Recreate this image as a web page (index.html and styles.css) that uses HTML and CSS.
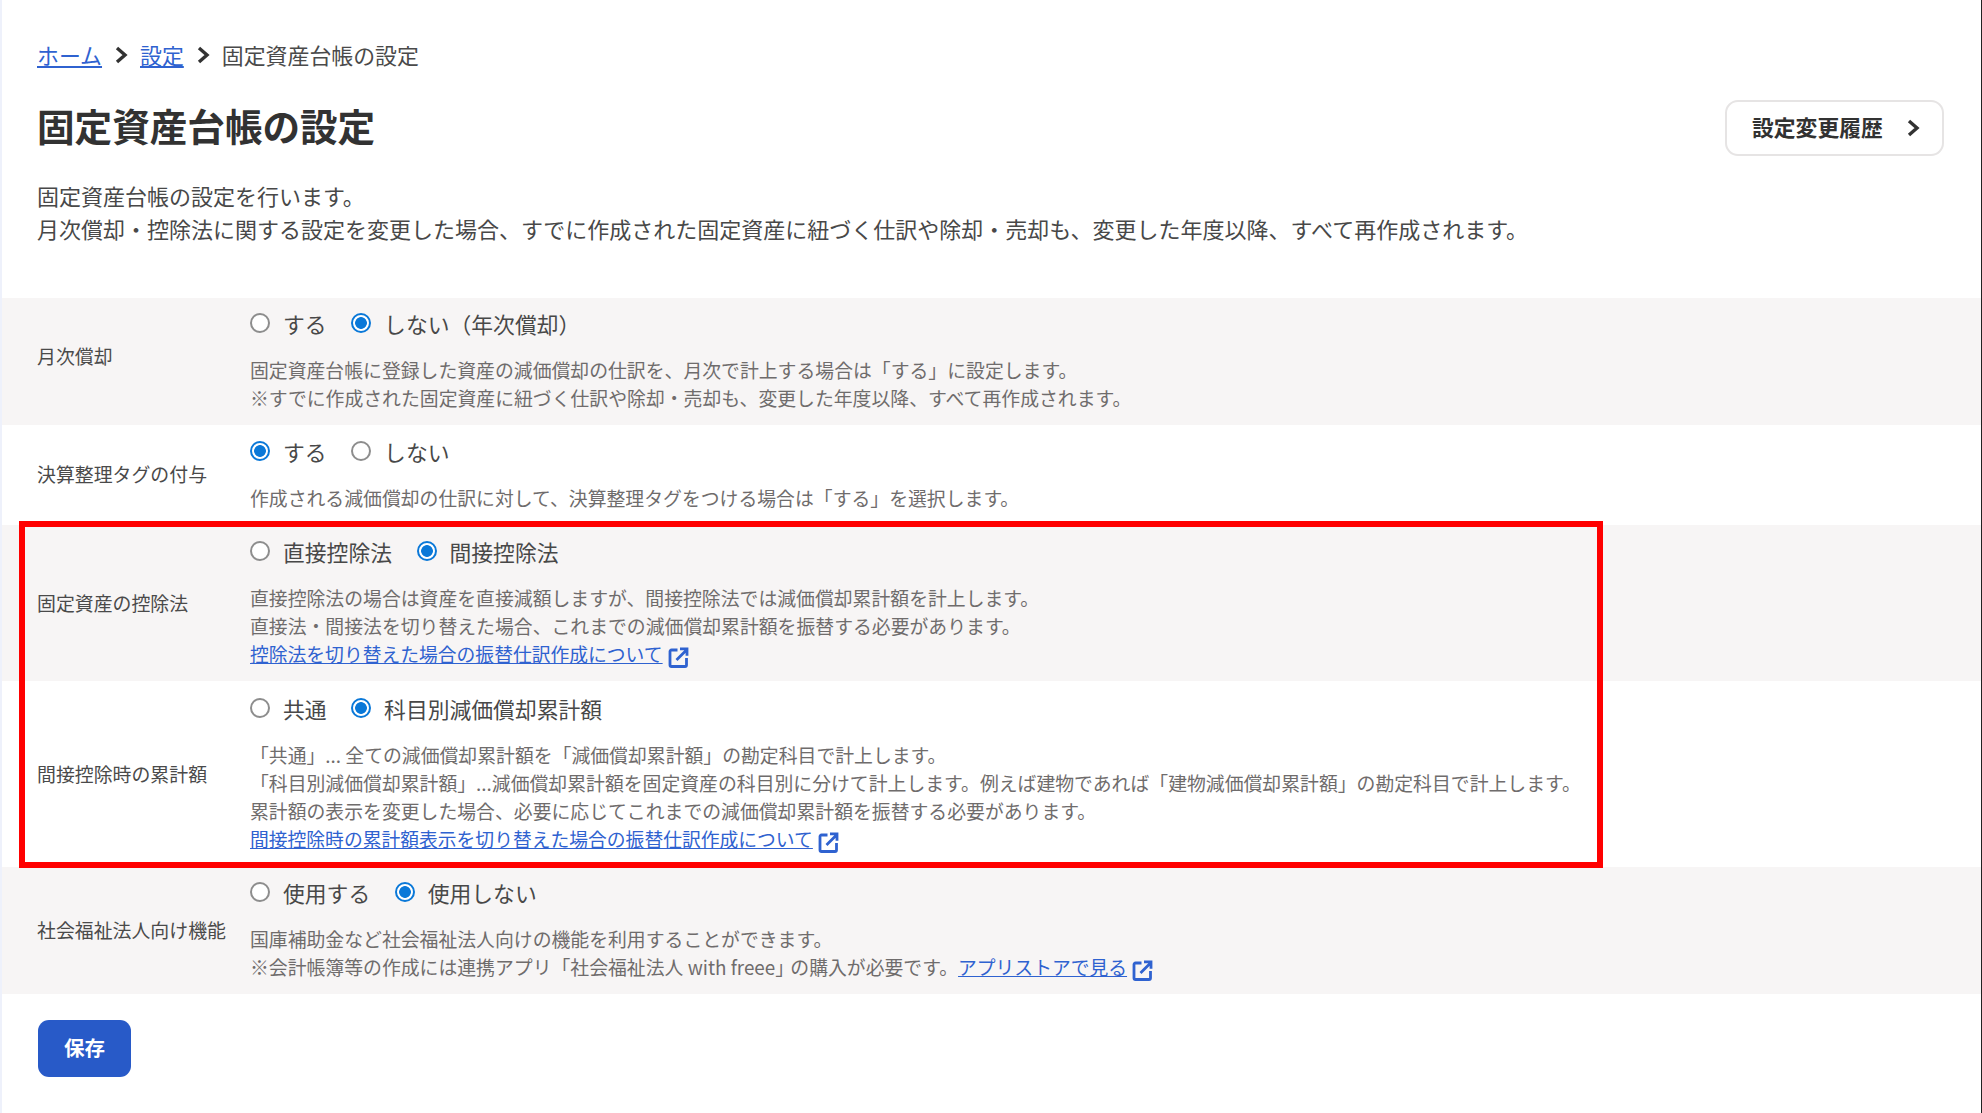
FILE: index.html
```html
<!DOCTYPE html>
<html lang="ja">
<head>
<meta charset="utf-8">
<title>固定資産台帳の設定</title>
<link rel="stylesheet" href="styles.css">
</head>
<body>
<svg class="sprite" width="0" height="0" aria-hidden="true">
  <symbol id="chev" viewBox="0 0 14 20"><path d="M3 3l8 7-8 7" fill="none" stroke="currentColor" stroke-width="3.4"/></symbol>
  <symbol id="ext" viewBox="0 0 20 21"><path d="M9 3H3a1.5 1.5 0 0 0-1.5 1.5v13.5A1.5 1.5 0 0 0 3 19.500h13.500A1.500 1.500 0 0 0 18 18v-7M8 13L18 3M11.500 1.800h7v7" fill="none" stroke="currentColor" stroke-width="2.800"/></symbol>
</svg>
<main class="page">
  <nav class="crumbs">
    <a href="#">ホーム</a>
    <svg class="crumb-chev"><use href="#chev"/></svg>
    <a href="#">設定</a>
    <svg class="crumb-chev"><use href="#chev"/></svg>
    <span>固定資産台帳の設定</span>
  </nav>
  <header class="head">
    <h1>固定資産台帳の設定</h1>
    <button class="history" type="button"><span class="history-text">設定変更履歴</span><svg class="history-chev"><use href="#chev"/></svg></button>
  </header>
  <p class="intro">固定資産台帳の設定を行います。<br>月次償却・控除法に関する設定を変更した場合、すでに作成された固定資産に紐づく仕訳や除却・売却も、変更した年度以降、すべて再作成されます。</p>

  <section class="settings">
    <div class="row row-first shaded">
      <div class="label label-high">月次償却</div>
      <div class="body">
        <div class="radios">
          <label class="opt"><input type="radio" name="a">する</label>
          <label class="opt"><input type="radio" name="a" checked>しない（年次償却）</label>
        </div>
        <p class="help">固定資産台帳に登録した資産の減価償却の仕訳を、月次で計上する場合は「する」に設定します。<br>※すでに作成された固定資産に紐づく仕訳や除却・売却も、変更した年度以降、すべて再作成されます。</p>
      </div>
    </div>
    <div class="row">
      <div class="label label-nudge">決算整理タグの付与</div>
      <div class="body">
        <div class="radios">
          <label class="opt"><input type="radio" name="b" checked>する</label>
          <label class="opt"><input type="radio" name="b">しない</label>
        </div>
        <p class="help">作成される減価償却の仕訳に対して、決算整理タグをつける場合は「する」を選択します。</p>
      </div>
    </div>
    <div class="highlighted">
      <div class="row shaded">
        <div class="label">固定資産の控除法</div>
        <div class="body">
          <div class="radios">
            <label class="opt"><input type="radio" name="c">直接控除法</label>
            <label class="opt"><input type="radio" name="c" checked>間接控除法</label>
          </div>
          <p class="help">直接控除法の場合は資産を直接減額しますが、間接控除法では減価償却累計額を計上します。<br>直接法・間接法を切り替えた場合、これまでの減価償却累計額を振替する必要があります。<br><a href="#">控除法を切り替えた場合の振替仕訳作成について</a><svg class="ext"><use href="#ext"/></svg></p>
        </div>
      </div>
      <div class="row row-tall">
        <div class="label">間接控除時の累計額</div>
        <div class="body">
          <div class="radios">
            <label class="opt"><input type="radio" name="d">共通</label>
            <label class="opt"><input type="radio" name="d" checked>科目別減価償却累計額</label>
          </div>
          <p class="help">「共通」... 全ての減価償却累計額を「減価償却累計額」の勘定科目で計上します。<br>「科目別減価償却累計額」...減価償却累計額を固定資産の科目別に分けて計上します。例えば建物であれば「建物減価償却累計額」の勘定科目で計上します。<br>累計額の表示を変更した場合、必要に応じてこれまでの減価償却累計額を振替する必要があります。<br><a href="#">間接控除時の累計額表示を切り替えた場合の振替仕訳作成について</a><svg class="ext"><use href="#ext"/></svg></p>
        </div>
      </div>
      <div class="redbox"></div>
    </div>
    <div class="row row-first shaded">
      <div class="label">社会福祉法人向け機能</div>
      <div class="body">
        <div class="radios">
          <label class="opt"><input type="radio" name="e">使用する</label>
          <label class="opt"><input type="radio" name="e" checked>使用しない</label>
        </div>
        <p class="help">国庫補助金など社会福祉法人向けの機能を利用することができます。<br>※会計帳簿等の作成には連携アプリ「社会福祉法人 with freee<span class="tight">」</span>の購入が必要です。<a href="#">アプリストアで見る</a><svg class="ext"><use href="#ext"/></svg></p>
      </div>
    </div>
  </section>
  <button class="save" type="button"><span class="save-text">保存</span></button>
</main>
</body>
</html>
```
FILE: styles.css
```css
* { box-sizing: border-box; }
html, body { margin: 0; height: 100%; }
body {
  background: #fff;
  color: #323232;
  font-family: "Noto Sans CJK JP", "Noto Sans", sans-serif;
  border-left: 2px solid #eef1fb;
  border-right: 1px solid #222;
  overflow: hidden;
}
.sprite { position: absolute; }
a { color: #2f62d0; text-decoration: underline; }

.page { padding-top: 39px; }

.crumbs {
  display: flex;
  align-items: center;
  height: 32px;
  padding-left: 35px;
  font-size: 21.9px;
  line-height: 31px;
  color: #4a4a4a;
}
.crumbs a, .crumbs span { padding-bottom: 1px; }
.crumb-chev { width: 14px; height: 20px; margin: 0 12px; color: #323232; }

.head {
  display: flex;
  align-items: center;
  justify-content: space-between;
  height: 56px;
  margin-top: 29px;
  padding: 0 37px 0 35px;
}
h1 { margin: 0; padding-bottom: 6px; font-size: 37.6px; line-height: 50px; font-weight: 700; color: #323232; }
.history {
  display: flex;
  align-items: center;
  justify-content: space-between;
  width: 219px;
  height: 56px;
  padding: 0 22px 0 25px;
  border: 2px solid #e6e4e4;
  border-radius: 13px;
  background: #fff;
  font: 700 21.8px "Noto Sans CJK JP", sans-serif;
  color: #323232;
}
.history-text { padding-bottom: 4px; }
.history-chev { width: 14px; height: 20px; }

.intro {
  margin: 23px 0 0;
  padding-left: 35px;
  font-size: 22px;
  line-height: 32.5px;
  color: #484848;
}

.settings { margin-top: 54px; }
.row {
  display: flex;
  align-items: center;
  padding: 12px 0 13px 35px;
}
.row-first { padding-top: 11px; }
.row-tall { padding-top: 13px; padding-bottom: 14px; }
.shaded { background: #f7f5f5; }
.label { width: 213px; flex: none; font-size: 18.9px; line-height: 28px; color: #4a4a4a; }
.label-high { margin-bottom: 10px; }
.label-nudge { margin-bottom: 2px; }
.body { flex: 1; }
.radios { display: flex; align-items: center; height: 30px; gap: 24.5px; }
.opt { display: flex; align-items: center; gap: 13px; font-size: 21.8px; line-height: 30px; color: #484848; }
.opt input {
  appearance: none;
  flex: none;
  width: 20px;
  height: 20px;
  margin: -2px 0 0;
  border: 2.5px solid #8d8d8d;
  border-radius: 50%;
  background: #fff;
}
.opt input:checked {
  border-color: #0a78d8;
  background: radial-gradient(circle, #0a78d8 0 5.500px, #fff 6.200px);
}
.help { margin: 17px 0 0; font-size: 18.85px; line-height: 28px; color: #6f6c6c; }
.help a { font-size: 18.8px; }
.tight { letter-spacing: -0.2em; }
.ext { width: 21px; height: 21px; margin-left: 5px; vertical-align: -6px; color: #2f62d0; }

.highlighted { position: relative; }
.redbox {
  position: absolute;
  left: 17px;
  top: -4px;
  width: 1584px;
  height: 347px;
  border: 6px solid #f00;
  pointer-events: none;
}

.save {
  display: block;
  width: 93px;
  height: 57px;
  margin: 26px 0 0 36px;
  border: 0;
  border-radius: 11px;
  background: #285ac8;
  color: #fff;
  font: 700 20.500px "Noto Sans CJK JP", sans-serif;
}
.save-text { display: block; padding-bottom: 4px; }
```
